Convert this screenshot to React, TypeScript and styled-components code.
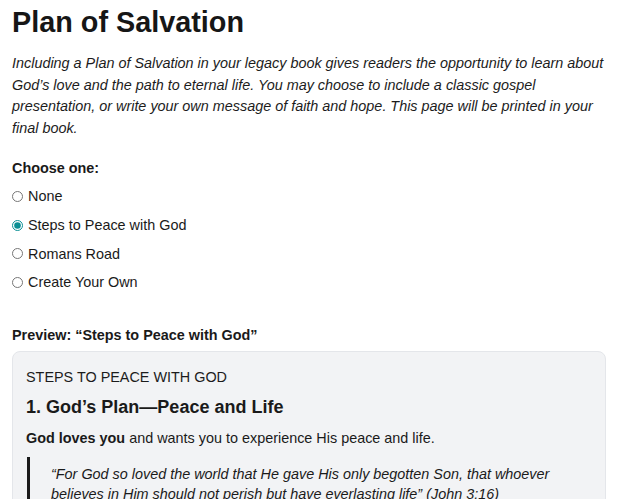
import React, { useState } from "react";
import styled, { createGlobalStyle } from "styled-components";

const Global = createGlobalStyle`
  html, body { margin: 0; padding: 0; background: #fff; }
  body { font-family: "Liberation Sans", Arial, sans-serif; color: #1a1a1a; }
`;

const Page = styled.div`
  padding: 0 17px 0 12px;
`;

const Title = styled.h1`
  font-size: 28.8px;
  font-weight: 700;
  margin: 4px 0 0;
  line-height: 36px;
  color: #161616;
`;

const Intro = styled.p`
  font-size: 14.4px;
  font-style: italic;
  line-height: 21.6px;
  margin: 13px 0 0;
  color: #1c1c1c;
`;

const Label = styled.div`
  font-size: 14.4px;
  font-weight: 700;
  margin-top: 19px;
  line-height: 20px;
`;

const Options = styled.div`
  display: flex;
  flex-direction: column;
  gap: 8.7px;
  margin-top: 8px;
`;

const Option = styled.label`
  display: flex;
  align-items: center;
  font-size: 14.4px;
  line-height: 20px;
  cursor: pointer;
`;

const Radio = styled.input`
  margin: 0 5px 0 0;
  width: 11px;
  height: 11px;
  accent-color: #0a8f94;
`;

const PreviewLabel = styled.div`
  font-size: 14.4px;
  font-weight: 700;
  margin-top: 33px;
  line-height: 20px;
`;

const Card = styled.div`
  margin-top: 6px;
  background: #f2f3f5;
  border: 1px solid #e4e6ea;
  border-radius: 8px;
  padding: 15px 13px 20px;
`;

const Kicker = styled.div`
  font-size: 14.4px;
  text-transform: uppercase;
  line-height: 20px;
  color: #1c1c1c;
`;

const StepTitle = styled.h2`
  font-size: 18px;
  font-weight: 700;
  margin: 9px 0 0;
  line-height: 22px;
`;

const Body = styled.p`
  font-size: 14.4px;
  line-height: 20px;
  margin: 10px 0 0;
`;

const Quote = styled.blockquote`
  margin: 9px 0 0 1px;
  border-left: 3px solid #1a1a1a;
  padding: 7px 0 0 21px;
  font-size: 14.4px;
  font-style: italic;
  line-height: 20px;
`;

const options = ["None", "Steps to Peace with God", "Romans Road", "Create Your Own"];

export default function App() {
  const [sel, setSel] = useState("Steps to Peace with God");
  return (
    <Page>
      <Global />
      <Title>Plan of Salvation</Title>
      <Intro>
        Including a Plan of Salvation in your legacy book gives readers the opportunity to learn about
        God’s love and the path to eternal life. You may choose to include a classic gospel
        presentation, or write your own message of faith and hope. This page will be printed in your
        final book.
      </Intro>
      <Label>Choose one:</Label>
      <Options>
        {options.map((o) => (
          <Option key={o}>
            <Radio type="radio" name="plan" checked={sel === o} onChange={() => setSel(o)} />
            {o}
          </Option>
        ))}
      </Options>
      <PreviewLabel>Preview: “{sel}”</PreviewLabel>
      <Card>
        <Kicker>Steps to Peace with God</Kicker>
        <StepTitle>1. God’s Plan—Peace and Life</StepTitle>
        <Body>
          <b>God loves you</b> and wants you to experience His peace and life.
        </Body>
        <Quote>
          “For God so loved the world that He gave His only begotten Son, that whoever believes in Him
          should not perish but have everlasting life” (John 3:16)
        </Quote>
      </Card>
    </Page>
  );
}
